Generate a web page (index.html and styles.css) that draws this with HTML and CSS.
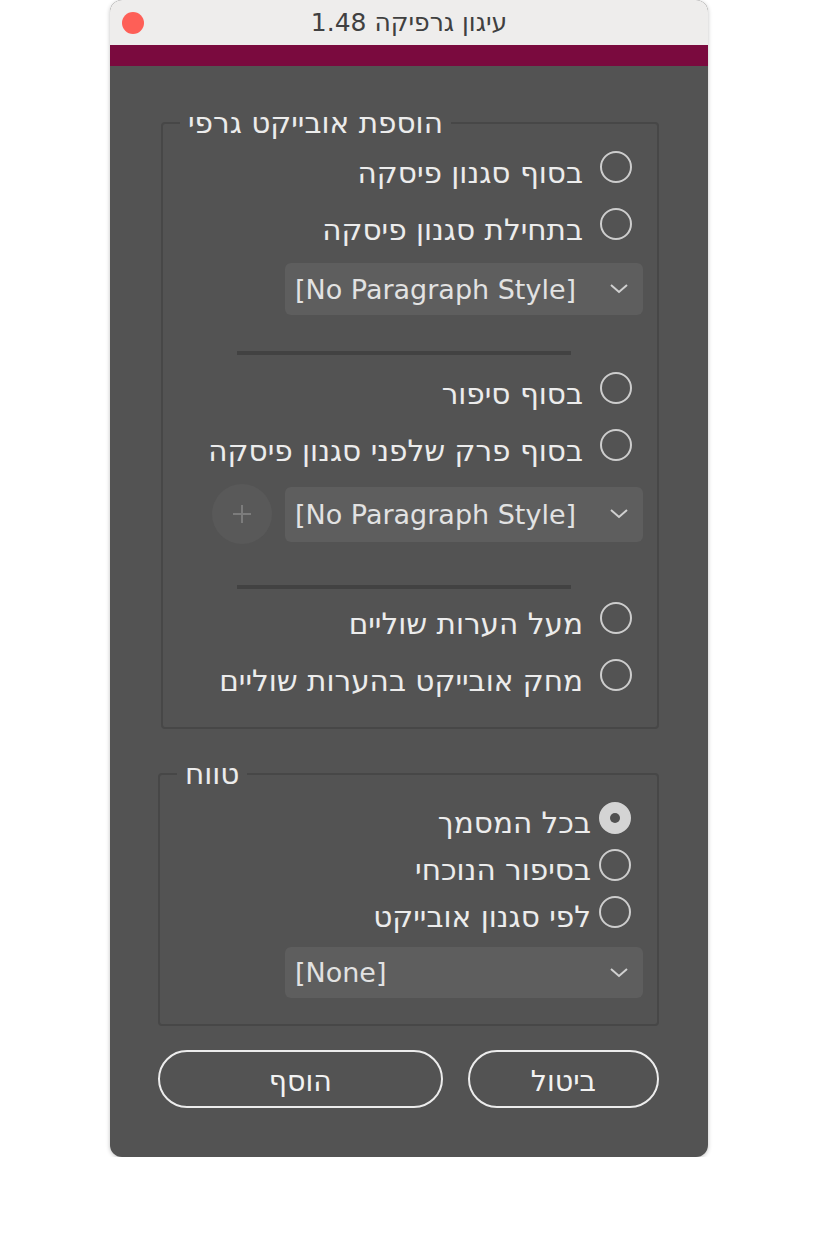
FILE: index.html
```html
<!DOCTYPE html>
<html lang="he">

<head>
    <meta charset="UTF-8">
    <meta name="viewport" content="width=device-width, initial-scale=1.0">
    <title>עיגון גרפיקה 1.48</title>
    <link rel="stylesheet" href="styles.css">
</head>

<body>
    <div class="window">
        <div class="titlebar">
            <span class="close"></span>
            <span class="title" dir="rtl">עיגון גרפיקה 1.48</span>
            <span></span>
        </div>
        <div class="accent"></div>

        <div class="content">
            <fieldset class="group group-add">
                <legend dir="rtl">הוספת אובייקט גרפי</legend>
                <div class="items" dir="rtl">
                    <label class="option"><span class="radio"></span><span class="text">בסוף סגנון פיסקה</span></label>
                    <label class="option"><span class="radio"></span><span class="text">בתחילת סגנון פיסקה</span></label>
                    <div class="select first-select" dir="ltr">
                        <span>[No Paragraph Style]</span>
                        <svg class="chevron" width="18" height="10" viewBox="0 0 18 10"><polyline points="1,1 9,8 17,1" /></svg>
                    </div>
                    <div class="separator first-sep"></div>
                    <label class="option after-sep"><span class="radio"></span><span class="text">בסוף סיפור</span></label>
                    <label class="option"><span class="radio"></span><span class="text">בסוף פרק שלפני סגנון פיסקה</span></label>
                    <div class="select-row">
                        <div class="select tall-select" dir="ltr">
                            <span>[No Paragraph Style]</span>
                            <svg class="chevron" width="18" height="10" viewBox="0 0 18 10"><polyline points="1,1 9,8 17,1" /></svg>
                        </div>
                        <div class="add-btn">
                            <svg width="20" height="20" viewBox="0 0 20 20"><line x1="10" y1="1" x2="10" y2="19" /><line x1="1" y1="10" x2="19" y2="10" /></svg>
                        </div>
                    </div>
                    <div class="separator second-sep"></div>
                    <label class="option"><span class="radio"></span><span class="text">מעל הערות שוליים</span></label>
                    <label class="option"><span class="radio"></span><span class="text">מחק אובייקט בהערות שוליים</span></label>
                </div>
            </fieldset>

            <fieldset class="group group-range">
                <legend dir="rtl">טווח</legend>
                <div class="items" dir="rtl">
                    <label class="option compact"><span class="radio checked"></span><span class="text">בכל המסמך</span></label>
                    <label class="option compact"><span class="radio"></span><span class="text">בסיפור הנוכחי</span></label>
                    <label class="option compact"><span class="radio"></span><span class="text">לפי סגנון אובייקט</span></label>
                    <div class="select range-select" dir="ltr">
                        <span>[None]</span>
                        <svg class="chevron" width="18" height="10" viewBox="0 0 18 10"><polyline points="1,1 9,8 17,1" /></svg>
                    </div>
                </div>
            </fieldset>

            <div class="buttons">
                <button class="btn btn-add">הוסף</button>
                <button class="btn btn-cancel">ביטול</button>
            </div>
        </div>
    </div>
</body>

</html>
```

FILE: styles.css
```css
body {
    margin: 0;
    background-color: #fff;
    font-family: 'DejaVu Sans', sans-serif;
}

.window {
    width: 598px;
    margin-left: 110px;
    border-radius: 12px;
    overflow: hidden;
    background-color: #535353;
    box-shadow: 0 1px 4px rgba(0, 0, 0, 0.25);
}

.titlebar {
    height: 45px;
    background-color: #eeedec;
    display: grid;
    grid-template-columns: 1fr auto 1fr;
    align-items: center;
}

.close {
    width: 22px;
    height: 22px;
    border-radius: 50%;
    background-color: #fe5f57;
    margin-left: 12px;
}

.title {
    font-size: 25px;
    color: #404040;
}

.accent {
    height: 21px;
    background-color: #7a0a3e;
}

.content {
    padding: 42px 49px 49px 48px;
}

.group {
    margin: 0;
    padding: 0;
    border: 2px solid #474747;
    border-radius: 4px;
}

.group-add {
    margin-left: 3px;
    padding-bottom: 24px;
}

.group-range {
    margin-top: 30px;
    padding-bottom: 26px;
}

legend {
    margin-left: 17px;
    padding: 0 8px;
    font-size: 29.5px;
    line-height: 30px;
    color: #ececec;
}

.items {
    display: flex;
    flex-direction: column;
}

.option {
    height: 57px;
    display: flex;
    align-items: center;
    gap: 17px;
    padding-right: 25px;
    font-size: 29.5px;
    color: #ececec;
}

/* hebrew letters sit a little below the radio's centre */
.option .text {
    padding-top: 12px;
}

.option.compact {
    height: 47px;
    gap: 8px;
    padding-right: 26px;
}

.option.compact .text {
    padding-top: 10px;
}

.group-range .option.compact:first-child {
    margin-top: 5px;
}

.radio {
    width: 28px;
    height: 28px;
    border: 2px solid #cdcdcd;
    border-radius: 50%;
    flex-shrink: 0;
    display: flex;
    align-items: center;
    justify-content: center;
}

.radio.checked {
    background-color: #d4d4d4;
    border-color: #d4d4d4;
}

.radio.checked::after {
    content: "";
    width: 10px;
    height: 10px;
    border-radius: 50%;
    background-color: #505050;
}

.select {
    width: 358px;
    height: 52px;
    box-sizing: border-box;
    margin-right: 14px;
    padding: 0 15px 0 10px;
    border-radius: 6px;
    background-color: #5e5e5e;
    display: flex;
    align-items: center;
    justify-content: space-between;
    font-size: 27px;
    color: #e2e2e2;
}

.chevron polyline {
    fill: none;
    stroke: #d0d0d0;
    stroke-width: 2;
}

.first-select {
    margin-top: 11px;
}

.range-select {
    margin-top: 12px;
    height: 51px;
}

.select-row {
    margin-top: 11px;
    display: flex;
    align-items: center;
    gap: 13px;
}

.tall-select {
    height: 55px;
}

.add-btn {
    width: 60px;
    height: 60px;
    border-radius: 50%;
    background-color: #595959;
    display: flex;
    align-items: center;
    justify-content: center;
}

.add-btn line {
    stroke: #7c7c7c;
    stroke-width: 2;
}

.separator {
    height: 4px;
    background-color: #424242;
    margin-left: 74px;
    margin-right: 86px;
}

.first-sep {
    margin-top: 36px;
}

.second-sep {
    margin-top: 41px;
}

.after-sep {
    margin-top: 4px;
}

.buttons {
    margin-top: 24px;
    display: flex;
    gap: 25px;
}

.btn {
    height: 58px;
    padding-top: 5px;
    border: 2px solid #ececec;
    border-radius: 29px;
    background: transparent;
    color: #f2f2f2;
    font-family: 'DejaVu Sans', sans-serif;
    font-size: 28.5px;
}

.btn-add {
    width: 286px;
}

.btn-cancel {
    width: 192px;
}
```
